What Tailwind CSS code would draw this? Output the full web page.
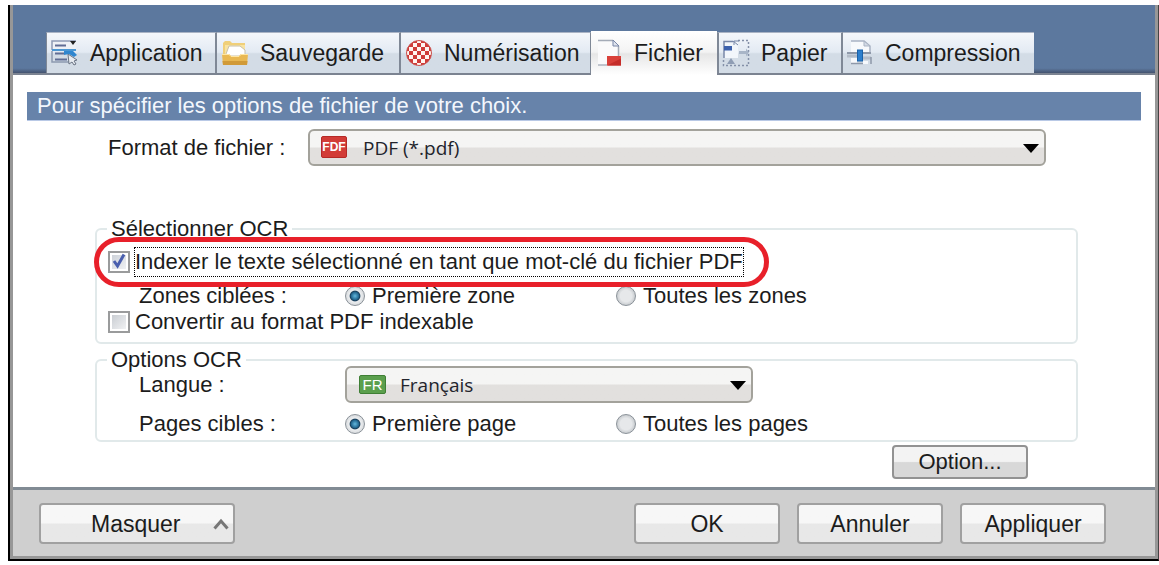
<!DOCTYPE html>
<html lang="fr">
<head>
  <meta charset="UTF-8" />
  <meta name="viewport" content="width=device-width, initial-scale=1" />
  <title>Options de fichier</title>
  <script src="https://cdn.jsdelivr.net/npm/@tailwindcss/browser@4"></script>
</head>
<body class="bg-white pt-[5px] pl-2 font-['Liberation_Sans',sans-serif] text-[22px] leading-6 text-[#1c1c1c]">
  <div class="border-l-2 border-r border-b-2 border-black border-r-[#444]">
    <div class="border-x-[3px] border-b-[3px] border-[#979797]">

      <!-- Tabs -->
      <nav class="flex items-end border-b-2 border-[#7b8391] bg-linear-to-b from-[#5c789e] from-93% to-[#44536f] pt-[26px] pl-[33px] text-[23px]">
        <button type="button" class="flex h-[41px] w-[171px] items-center border-t border-r-2 border-l border-[#7f8896] border-t-[#a9b3c4] bg-linear-to-b from-[#f4f7fb] from-0% via-[#e3eaf3] via-48% to-[#d3dce6] to-52% pl-1">
          <svg class="mr-[11px] h-7 w-7 shrink-0" viewBox="0 0 28 28">
            <path d="M1 2h24v9H1z" fill="#eef1f6" />
            <path d="M1 11V2h24" fill="none" stroke="#8f9bb5" stroke-width="1.500" />
            <path d="M4 6.500h11M4 14.500h9M4 20.500h12" stroke="#606d94" stroke-width="2" />
            <path d="M19 2h6l-3 4z" fill="#222" />
            <path d="M1 11h24" stroke="#4b96d2" stroke-width="2" />
            <path d="M1 12v11h18" fill="none" stroke="#8d99b0" stroke-width="1.500" />
            <path d="M17 15l9 6-3 1 2 3-2 1-2-3-3 2z" fill="#e8ecf1" stroke="#6a7484" />
            <path d="M13 12h9l4 4-3 2-5-3-5 1z" fill="#2f86cf" />
          </svg>
          Application
        </button>
        <button type="button" class="flex h-[41px] w-[184px] items-center border-t border-r-2 border-[#7f8896] border-t-[#a9b3c4] bg-linear-to-b from-[#f4f7fb] from-0% via-[#e3eaf3] via-48% to-[#d3dce6] to-52% pl-1">
          <svg class="mr-[11px] h-7 w-7 shrink-0" viewBox="0 0 28 28">
            <path d="M2 4l2-2h5l2 2h13v14H2z" fill="#f0cf79" />
            <path d="M4 6h20v12H4z" fill="#f9e3a0" />
            <path d="M5 15l3-8h11l5 4v6H5z" fill="#fff" stroke="#c9c0a8" />
            <path d="M1 15h7l2 2h8l2-2h7l-1 11H2z" fill="#e9b852" />
            <path d="M1.500 22h25l-.5 4H2z" fill="#d19a38" />
            <path d="M1 15.500h7l2 2h8l2-2h7" fill="none" stroke="#ffe6a3" />
          </svg>
          Sauvegarde
        </button>
        <button type="button" class="flex h-[41px] w-[190px] items-center border-t border-r border-[#7f8896] border-t-[#a9b3c4] bg-linear-to-b from-[#f4f7fb] from-0% via-[#e3eaf3] via-48% to-[#d3dce6] to-52% pl-1">
          <svg class="mr-[11px] h-7 w-7 shrink-0" viewBox="0 0 28 28">
            <defs>
              <pattern id="checks" width="8" height="8" patternUnits="userSpaceOnUse">
                <rect width="8" height="8" fill="#fff4ef" />
                <path d="M0 0h4v4H0zM4 4h4v4H4z" fill="#cf3b38" />
              </pattern>
            </defs>
            <circle cx="14" cy="14" r="12.500" fill="url(#checks)" stroke="#c9504c" />
          </svg>
          Numérisation
        </button>
        <button type="button" aria-current="page" class="-mb-[2px] flex h-11 w-[126px] items-center bg-[linear-gradient(#ffffff,#f3f3f3_48%,#e6e6e6_52%,#ffffff)] pl-1">
          <svg class="mr-[11px] h-7 w-7 shrink-0" viewBox="0 0 28 28">
            <path d="M3 1h15l6 6v19H3z" fill="#fafafb" />
            <path d="M3 1.500h15M23.500 7v11" fill="none" stroke="#a4abb7" stroke-width="1.500" />
            <path d="M18 1v6h6z" fill="#dfe4ee" stroke="#7886a7" />
            <path d="M3 26h9" stroke="#aeb4bf" stroke-width="1.500" />
            <path d="M12 17h14v9.500H12z" fill="#d9403a" />
            <path d="M12 26.500l14-7v7z" fill="#c52d2a" />
          </svg>
          Fichier
        </button>
        <button type="button" class="flex h-[41px] w-[126px] items-center border-t border-r-2 border-l-2 border-[#7f8896] border-t-[#a9b3c4] bg-linear-to-b from-[#f4f7fb] from-0% via-[#e3eaf3] via-48% to-[#d3dce6] to-52% pl-[3px]">
          <svg class="mr-[11px] h-7 w-7 shrink-0" viewBox="0 0 28 28">
            <path d="M16 1.500h10.500v25h-25V19" fill="none" stroke="#8490a8" stroke-width="1.500" stroke-dasharray="2 2" />
            <path d="M2 3h14v16H2z" fill="#f2f6fb" />
            <path d="M2 19V2.500h9" fill="none" stroke="#7988a8" stroke-width="1.500" />
            <path d="M2 7h8v4.500H2z" fill="#3c61ad" />
            <path d="M11 2l5 4M17 2h-5v4" stroke="#7988a8" fill="none" />
            <path d="M17 12h7V9.500l3 4-3 4V15h-7z" fill="#a8b5c7" />
            <path d="M5 25l4-6 4 6z" fill="#8f9db4" />
          </svg>
          Papier
        </button>
        <button type="button" class="flex h-[41px] w-[191px] items-center border-t border-[#7f8896] border-t-[#a9b3c4] bg-linear-to-b from-[#f4f7fb] from-0% via-[#e3eaf3] via-48% to-[#d3dce6] to-52% pl-[3px]">
          <svg class="mr-[11px] h-7 w-7 shrink-0" viewBox="0 0 28 28">
            <path d="M5 2h13l6 5v7H5z" fill="#f7f9fc" />
            <path d="M5 2h13l6 5v7" fill="none" stroke="#a9b3c3" stroke-width="1.500" />
            <path d="M18 2v5h6z" fill="#d3dae6" stroke="#a9b3c3" />
            <path d="M1 14h10M17 14h8" stroke="#8e98a9" stroke-width="2" />
            <path d="M1 17h10M17 19h8" stroke="#b4bcc8" stroke-width="3" />
            <path d="M5 19h6v5H5zM17 22h5v3h-5z" fill="#f7f9fc" />
            <path d="M25 18v7M5 24.500h12" stroke="#8e98a9" stroke-width="1.500" />
            <rect x="11.500" y="11" width="5" height="11" fill="#2d7fcd" stroke="#1b62a9" />
          </svg>
          Compression
        </button>
      </nav>

      <main class="flex flex-col bg-white px-3.5 pt-[17px] pb-2">
        <h1 class="border-b border-[#b9c9e6] bg-[#6783aa] pl-2.5 leading-[28px] text-[#f3f7fd]">Pour spécifier les options de fichier de votre choix.</h1>

        <div class="mt-2 mr-[95px] ml-[81px] flex items-center">
          <label for="format" class="w-50 shrink-0">Format de fichier :</label>
          <div class="relative flex-1">
            <select id="format" class="h-[37px] w-full appearance-none rounded-md border-2 border-[#a3a29b] bg-linear-to-b from-[#f5f5f4] from-48% to-[#e2e0de] to-52% pl-[53px] font-['Open_Sans',sans-serif] text-[19px] leading-6 text-[#22242c]">
              <option>PDF (*.pdf)</option>
              <option>JPEG (*.jpg)</option>
            </select>
            <span class="pointer-events-none absolute top-[7px] left-[13px] flex h-[22px] w-[26px] items-center justify-center rounded-xs border border-[#b52a27] bg-[#d23c37] text-xs font-bold text-white">FDF</span>
            <svg class="pointer-events-none absolute top-[15px] right-[7px] h-[9px] w-4" viewBox="0 0 16 9"><path d="M0 0h16L8 9z" /></svg>
          </div>
        </div>

        <fieldset class="mt-[57px] mr-[63px] ml-[68px] rounded-md border-2 border-[#e1e9ea] pb-2">
          <legend class="ml-2.5 px-1 leading-3">Sélectionner OCR</legend>
          <div class="relative mt-[14px] ml-[11px] flex h-[26px] items-center">
            <input id="index" type="checkbox" checked class="peer h-[22px] w-[22px] shrink-0 appearance-none border-2 border-[#9a9b9c] bg-linear-to-br from-[#c9ced6] to-[#f4f5f7] ring-2 ring-white ring-inset" />
            <svg class="pointer-events-none absolute top-1 left-1 hidden h-4 w-4 peer-checked:block" viewBox="0 0 16 16">
              <path d="M2 8l3.500 5L12 1.500" fill="none" stroke="#4a5fae" stroke-width="3" />
            </svg>
            <label for="index" class="ml-1 border border-dotted border-black leading-7">Indexer le texte sélectionné en tant que mot-clé du fichier PDF</label>
            <!-- Highlight around the option -->
            <div class="pointer-events-none absolute -top-3 -left-3.5 h-[50px] w-[675px] rounded-full border-[5px] border-[#e8202a]"></div>
          </div>
          <div role="radiogroup" aria-label="Zones ciblées" class="mt-[9px] ml-[42px] grid grid-cols-[206px_271px_1fr] items-center">
            <span>Zones ciblées :</span>
            <label class="flex items-center gap-[7px]">
              <input type="radio" name="zones" checked class="h-5 w-5 appearance-none rounded-full border border-[#8b9299] bg-[radial-gradient(circle,#e6e8ea_45%,#bfc3c7_80%)] checked:bg-[radial-gradient(circle,#62b8de_0%,#22668f_30%,#173c58_38%,#eceef0_46%,#d3d6d9_80%)]" />
              Première zone
            </label>
            <label class="flex items-center gap-[7px]">
              <input type="radio" name="zones" class="h-5 w-5 appearance-none rounded-full border border-[#8b9299] bg-[radial-gradient(circle,#e6e8ea_45%,#bfc3c7_80%)] checked:bg-[radial-gradient(circle,#62b8de_0%,#22668f_30%,#173c58_38%,#eceef0_46%,#d3d6d9_80%)]" />
              Toutes les zones
            </label>
          </div>
          <div class="mt-0.5 ml-[11px] flex items-center">
            <input id="convert" type="checkbox" class="h-[22px] w-[22px] shrink-0 appearance-none border-2 border-[#9a9b9c] bg-linear-to-br from-[#c4c8ce] to-[#f6f7f8] ring-2 ring-white ring-inset" />
            <label for="convert" class="ml-[5px]">Convertir au format PDF indexable</label>
          </div>
        </fieldset>

        <fieldset class="mt-[10px] mr-[63px] ml-[68px] rounded-md border-2 border-[#e1e9ea] pb-1">
          <legend class="ml-2.5 px-1 leading-3">Options OCR</legend>
          <div class="ml-[42px] grid grid-cols-[206px_408px] items-center">
            <label for="lang">Langue :</label>
            <div class="relative">
              <select id="lang" class="h-[37px] w-full appearance-none rounded-md border-2 border-[#a3a29b] bg-linear-to-b from-[#f5f5f4] from-48% to-[#e2e0de] to-52% pl-[53px] font-['Open_Sans',sans-serif] text-[19px] leading-6 text-[#22242c]">
                <option>Français</option>
                <option>Anglais</option>
              </select>
              <span class="pointer-events-none absolute top-[9px] left-[14px] flex h-[19px] w-[27px] items-center justify-center rounded-xs border border-[#3f7f35] bg-[#5b9f4d] text-[15px] text-white">FR</span>
              <svg class="pointer-events-none absolute top-[15px] right-[7px] h-[9px] w-4" viewBox="0 0 16 9"><path d="M0 0h16L8 9z" /></svg>
            </div>
          </div>
          <div role="radiogroup" aria-label="Pages cibles" class="mt-[9px] ml-[42px] grid grid-cols-[206px_271px_1fr] items-center">
            <span>Pages cibles :</span>
            <label class="flex items-center gap-[7px]">
              <input type="radio" name="pages" checked class="h-5 w-5 appearance-none rounded-full border border-[#8b9299] bg-[radial-gradient(circle,#e6e8ea_45%,#bfc3c7_80%)] checked:bg-[radial-gradient(circle,#62b8de_0%,#22668f_30%,#173c58_38%,#eceef0_46%,#d3d6d9_80%)]" />
              Première page
            </label>
            <label class="flex items-center gap-[7px]">
              <input type="radio" name="pages" class="h-5 w-5 appearance-none rounded-full border border-[#8b9299] bg-[radial-gradient(circle,#e6e8ea_45%,#bfc3c7_80%)] checked:bg-[radial-gradient(circle,#62b8de_0%,#22668f_30%,#173c58_38%,#eceef0_46%,#d3d6d9_80%)]" />
              Toutes les pages
            </label>
          </div>
        </fieldset>

        <button type="button" class="mt-[3px] mr-[113px] h-[34px] w-[136px] self-end rounded-sm border-2 border-[#929292] bg-linear-to-b from-[#f3f3f3] from-48% to-[#d8d8d8] to-52%">Option...</button>
      </main>

      <!-- Footer -->
      <footer class="flex items-center gap-[17px] border-t-[3px] border-[#818b94] bg-[#cfcfcf] pt-[13px] pr-[49px] pb-3 pl-[26px] text-[23px]">
        <button type="button" class="mr-auto flex h-[41px] w-[196px] items-center justify-between rounded-sm border-2 border-[#a0a0a0] bg-linear-to-b from-[#f7f7f7] from-48% to-[#e8e8e8] to-52% pr-1 pl-[50px]">
          Masquer
          <svg class="h-3 w-4" viewBox="0 0 16 12"><path d="M1.500 10.500L8 3l6.500 7.500" fill="none" stroke="#777" stroke-width="3" /></svg>
        </button>
        <button type="button" class="h-[41px] w-[146px] rounded-sm border-2 border-[#a0a0a0] bg-linear-to-b from-[#f7f7f7] from-48% to-[#e8e8e8] to-52%">OK</button>
        <button type="button" class="h-[41px] w-[146px] rounded-sm border-2 border-[#a0a0a0] bg-linear-to-b from-[#f7f7f7] from-48% to-[#e8e8e8] to-52%">Annuler</button>
        <button type="button" class="h-[41px] w-[146px] rounded-sm border-2 border-[#a0a0a0] bg-linear-to-b from-[#f7f7f7] from-48% to-[#e8e8e8] to-52%">Appliquer</button>
      </footer>
    </div>
  </div>
</body>
</html>
